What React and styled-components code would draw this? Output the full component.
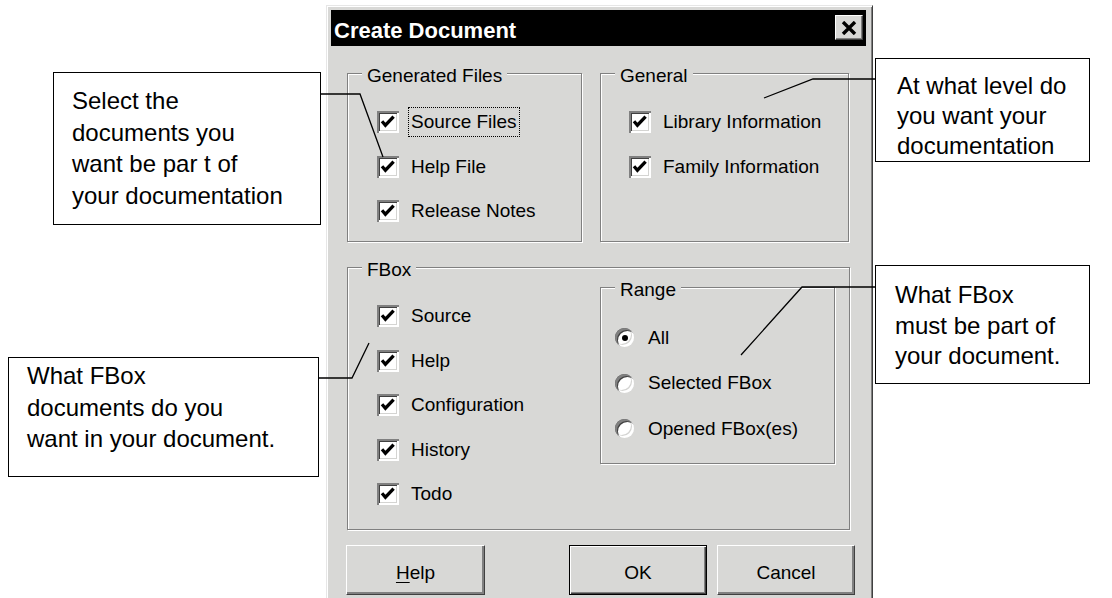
import styled, { createGlobalStyle } from 'styled-components'

const FACE = '#d8d8d6';

const GlobalStyle = createGlobalStyle`
  html, body {
    margin: 0;
    padding: 0;
    background: #fff;
  }
  body {
    font-family: "Liberation Sans", Arial, sans-serif;
    color: #000;
  }
`;

const CheckMark = () => (
  <svg width="22" height="22" viewBox="0 0 22 22">
    <path d="M5 10.2 L8.4 14.2 L16.6 5.6" fill="none" stroke="#000" strokeWidth="3.3" />
  </svg>
);

const CloseGlyph = () => (
  <svg width="16" height="14" viewBox="0 0 16 14">
    <path d="M2 1 L14 13 M14 1 L2 13" stroke="#000" strokeWidth="3.4" />
  </svg>
);

const Check = ({ label, focused }) => (
  <OptionRow>
    <CheckBox><CheckMark /></CheckBox>
    <OptionLabel $focused={focused}>{label}</OptionLabel>
  </OptionRow>
);

const Option = ({ label, selected }) => (
  <OptionRow $pitch={45.5}>
    <Radio>{selected && <RadioDot />}</Radio>
    <OptionLabel $gap={11}>{label}</OptionLabel>
  </OptionRow>
);

const App = () => {
  return (
    <>
      <GlobalStyle />
      <Page>
        <Side $width={326}>
          <Callout $left={53} $top={72} $width={268} $height={153} $pad="12px 0 0 18px" $lh={31.5}>
            Select the<br />documents you<br />want be par t of<br />your documentation
          </Callout>
          <Callout $left={8} $top={132} $width={311} $height={120} $pad="2px 0 0 18px" $lh={31.5}>
            What FBox<br />documents do you<br />want in your document.
          </Callout>
        </Side>

        <Window>
          <TitleBar>
            <TitleText>Create Document</TitleText>
            <CloseButton><CloseGlyph /></CloseButton>
          </TitleBar>
          <Body>
            <Groups>
              <TopRow>
                <GroupBox $width={235} $pad="17px 0 7.5px 0">
                  <Caption>Generated Files</Caption>
                  <OptionList $indent={29}>
                    <Check label="Source Files" focused />
                    <Check label="Help File" />
                    <Check label="Release Notes" />
                  </OptionList>
                </GroupBox>
                <GroupBox $width={249} $pad="17px 0 7.5px 0">
                  <Caption>General</Caption>
                  <OptionList $indent={28}>
                    <Check label="Library Information" />
                    <Check label="Family Information" />
                  </OptionList>
                </GroupBox>
              </TopRow>
              <GroupBox $width={503} $pad="0 0 12.5px 0">
                <Caption>FBox</Caption>
                <FBoxInner>
                  <OptionList $indent={29} $width={252} $top={17}>
                    <Check label="Source" />
                    <Check label="Help" />
                    <Check label="Configuration" />
                    <Check label="History" />
                    <Check label="Todo" />
                  </OptionList>
                  <GroupBox $width={235} $pad="18px 0 11.5px 0" $nested>
                    <Caption>Range</Caption>
                    <OptionList $indent={14}>
                      <Option label="All" selected />
                      <Option label="Selected FBox" />
                      <Option label="Opened FBox(es)" />
                    </OptionList>
                  </GroupBox>
                </FBoxInner>
              </GroupBox>
            </Groups>
            <ButtonRow>
              <PushButton $width={139} $push><u>H</u>elp</PushButton>
              <PushButton $width={138} $default>OK</PushButton>
              <PushButton $width={138} $gap={10}>Cancel</PushButton>
            </ButtonRow>
          </Body>
        </Window>

        <Side>
          <Callout $left={2} $top={58} $width={215} $height={104} $pad="12px 0 0 21px" $lh={30}>
            At what level do<br />you want your<br />documentation
          </Callout>
          <Callout $left={2} $top={103} $width={215} $height={119} $pad="14px 0 0 19px" $lh={30.5}>
            What FBox<br />must be part of<br />your document.
          </Callout>
        </Side>

        <Connectors viewBox="0 0 1112 598">
          <polyline points="321,94 360,94 383,157" />
          <polyline points="875,79 813,79 764,98" />
          <polyline points="319,378 352,378 369,343" />
          <polyline points="875,287 802,287 741,355" />
        </Connectors>
      </Page>
    </>
  );
};

export default App;

const Page = styled.div`
  position: relative;
  display: flex;
  align-items: flex-start;
  width: 1112px;
  height: 598px;
  overflow: hidden;
  background: #fff;
`;

const Side = styled.div`
  display: flex;
  flex-direction: column;
  flex: ${p => (p.$width ? `0 0 ${p.$width}px` : '1 1 auto')};
`;

const Callout = styled.div`
  box-sizing: border-box;
  width: ${p => p.$width}px;
  height: ${p => p.$height}px;
  margin-left: ${p => p.$left}px;
  margin-top: ${p => p.$top}px;
  padding: ${p => p.$pad};
  border: 1px solid #000;
  background: #fff;
  font-family: "Liberation Sans", Arial, sans-serif;
  font-size: 24px;
  line-height: ${p => p.$lh}px;
  color: #000;
  white-space: nowrap;
`;

const Connectors = styled.svg`
  position: absolute;
  left: 0;
  top: 0;
  width: 1112px;
  height: 598px;
  pointer-events: none;

  polyline {
    fill: none;
    stroke: #000;
    stroke-width: 1.3;
  }
`;

const Window = styled.div`
  flex: 0 0 547px;
  box-sizing: border-box;
  margin-top: 5px;
  padding: 4px 6px 14px 4px;
  background: ${FACE};
  border: 1px solid;
  border-color: #e6e6e6 #404040 #404040 #e6e6e6;
  box-shadow: inset 1px 1px 0 #fff, inset -1px -1px 0 #808080;
`;

const TitleBar = styled.div`
  display: flex;
  align-items: flex-start;
  justify-content: space-between;
  height: 36px;
  background: #000;
`;

const TitleText = styled.span`
  margin-top: 6px;
  padding-left: 3px;
  color: #fff;
  font-family: "Liberation Sans", Arial, sans-serif;
  font-size: 22px;
  font-weight: 700;
  line-height: 30px;
`;

const CloseButton = styled.div`
  display: flex;
  align-items: center;
  justify-content: center;
  box-sizing: border-box;
  width: 28px;
  height: 25px;
  margin-top: 5px;
  margin-right: 3px;
  background: ${FACE};
  border: 1px solid;
  border-color: #fff #404040 #404040 #fff;
  box-shadow: inset -1px -1px 0 #808080;
`;

const Body = styled.div`
  padding: 17px 11px 0 15px;
  font-family: "Liberation Sans", Arial, sans-serif;
  font-size: 19px;
`;

const Groups = styled.div`
  display: flex;
  flex-direction: column;
  gap: 15px;
  width: 503px;
  margin-left: 1px;
`;

const TopRow = styled.div`
  display: flex;
  align-items: stretch;
  gap: 18px;
`;

const GroupBox = styled.fieldset`
  box-sizing: border-box;
  width: ${p => p.$width}px;
  min-width: 0;
  margin: 0;
  padding: ${p => p.$pad};
  border: 1px solid #808080;
  box-shadow: inset 1px 1px 0 #fff, 1px 1px 0 #fff;
  align-self: ${p => (p.$nested ? 'flex-start' : 'stretch')};
`;

const Caption = styled.legend`
  margin-left: 14px;
  padding: 6px 5px 0;
  line-height: 14px;
  font-size: 19px;
  background: ${FACE};
  white-space: nowrap;
`;

const FBoxInner = styled.div`
  display: flex;
  align-items: flex-start;
`;

const OptionList = styled.div`
  box-sizing: border-box;
  width: ${p => (p.$width ? `${p.$width}px` : 'auto')};
  padding: ${p => p.$top || 0}px 0 0 ${p => p.$indent}px;
`;

const OptionRow = styled.div`
  display: flex;
  align-items: center;
  height: ${p => p.$pitch || 44.5}px;
`;

const CheckBox = styled.div`
  display: flex;
  flex: none;
  width: 22px;
  height: 22px;
  background: #fff;
  box-shadow:
    inset 2px 2px 0 #808080,
    inset -2px -2px 0 #fff,
    inset 3px 3px 0 #404040,
    inset -3px -3px 0 #d4d4d2;
`;

const Radio = styled.div`
  display: flex;
  align-items: center;
  justify-content: center;
  flex: none;
  width: 19px;
  height: 19px;
  border-radius: 50%;
  background: #fff;
  box-shadow:
    inset 2px 2px 0 #808080,
    inset -2px -2px 0 #fff,
    inset 3px 3px 0 #404040,
    inset -3px -3px 0 #d4d4d2;
`;

const RadioDot = styled.div`
  width: 6px;
  height: 6px;
  border-radius: 50%;
  background: #000;
`;

const OptionLabel = styled.span`
  margin-left: ${p => p.$gap || 9}px;
  padding: 0 2px;
  border: 1px dotted ${p => (p.$focused ? '#000' : 'transparent')};
  line-height: 28px;
  white-space: nowrap;
`;

const ButtonRow = styled.div`
  display: flex;
  margin-top: 15px;
`;

const PushButton = styled.div`
  display: flex;
  align-items: center;
  justify-content: center;
  box-sizing: border-box;
  width: ${p => p.$width}px;
  height: 50px;
  padding-top: 5px;
  margin-right: ${p => (p.$push ? 'auto' : '0')};
  margin-left: ${p => p.$gap || 0}px;
  background: ${FACE};
  font-size: 19px;
  line-height: 24px;
  border: 1px solid;
  border-color: ${p => (p.$default ? '#000' : '#fff #404040 #404040 #fff')};
  box-shadow: ${p =>
    p.$default
      ? 'inset 1px 1px 0 #fff, inset -1px -1px 0 #404040, inset -2px -2px 0 #808080'
      : 'inset -1px -1px 0 #808080, inset -2px -2px 0 #808080'};

  u {
    text-decoration-thickness: 1px;
    text-underline-offset: 3px;
  }
`;
